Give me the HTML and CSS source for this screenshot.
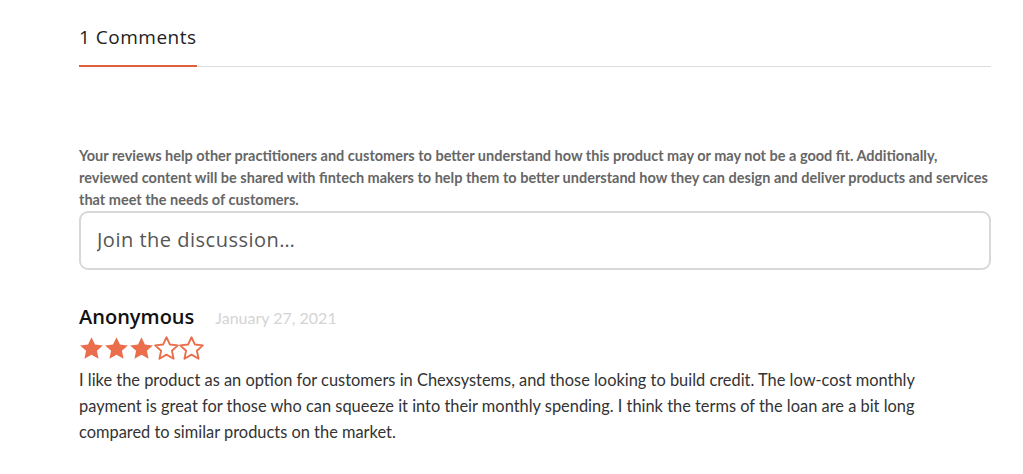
FILE: index.html
```html
<!DOCTYPE html>
<html lang="en">
<head>
  <meta charset="UTF-8" />
  <title>Comments</title>
  <link rel="stylesheet" href="styles.css">
</head>
<body>
  <div class="comments">
    <div class="tabs">
      <div class="tab active">1 Comments</div>
    </div>

    <p class="note">Your reviews help other practitioners and customers to better understand how this product may or may not be a good fit. Additionally, reviewed content will be shared with fintech makers to help them to better understand how they can design and deliver products and services that meet the needs of customers.</p>

    <input class="discuss" type="text" placeholder="Join the discussion…">

    <div class="comment">
      <div class="comment-head">
        <span class="author">Anonymous</span>
        <span class="date">January 27, 2021</span>
      </div>
      <div class="stars">
        <svg viewBox="0 0 24 24" class="star full"><path d="M12 1.2l3.3 7 7.6.8-5.7 5.2 1.6 7.6L12 17.9l-6.8 3.9 1.6-7.6L1.1 9l7.6-.8z"/></svg>
        <svg viewBox="0 0 24 24" class="star full"><path d="M12 1.2l3.3 7 7.6.8-5.7 5.2 1.6 7.6L12 17.9l-6.8 3.9 1.6-7.6L1.1 9l7.6-.8z"/></svg>
        <svg viewBox="0 0 24 24" class="star full"><path d="M12 1.2l3.3 7 7.6.8-5.7 5.2 1.6 7.6L12 17.9l-6.8 3.9 1.6-7.6L1.1 9l7.6-.8z"/></svg>
        <svg viewBox="0 0 24 24" class="star empty"><path d="M12 1.2l3.3 7 7.6.8-5.7 5.2 1.6 7.6L12 17.9l-6.8 3.9 1.6-7.6L1.1 9l7.6-.8z"/></svg>
        <svg viewBox="0 0 24 24" class="star empty"><path d="M12 1.2l3.3 7 7.6.8-5.7 5.2 1.6 7.6L12 17.9l-6.8 3.9 1.6-7.6L1.1 9l7.6-.8z"/></svg>
      </div>
      <p class="text">I like the product as an option for customers in Chexsystems, and those looking to build credit. The low-cost monthly payment is great for those who can squeeze it into their monthly spending. I think the terms of the loan are a bit long compared to similar products on the market.</p>
    </div>
  </div>
</body>
</html>
```

FILE: styles.css
```css
* {
  margin: 0;
  padding: 0;
  box-sizing: border-box;
}

body {
  background: #fff;
  font-family: Lato, "Open Sans", sans-serif;
  color: #333;
}

.comments {
  width: 912px;
  margin-left: 79px;
  padding-top: 24px;
}

.tabs {
  display: flex;
  border-bottom: 1px solid #ddd;
}

.tab {
  font-family: "Open Sans", sans-serif;
  font-size: 19px;
  letter-spacing: 0.5px;
  color: #222;
  padding-bottom: 15px;
  margin-bottom: -1px;
}

.tab.active {
  border-bottom: 2px solid #e0603c;
}

.note {
  margin-top: 78px;
  font-size: 14.5px;
  font-weight: 700;
  line-height: 22px;
  color: #666;
}

.discuss {
  display: block;
  width: 100%;
  height: 59px;
  border: 2px solid #d8d8d8;
  border-radius: 9px;
  padding: 0 16px 3px;
  font-family: "Open Sans", sans-serif;
  font-size: 20px;
  letter-spacing: 0.5px;
  color: #555;
  outline: none;
}

.discuss::placeholder {
  color: #555;
}

.comment {
  margin-top: 33px;
}

.comment-head {
  display: flex;
  align-items: baseline;
  gap: 21px;
}

.author {
  font-family: "Open Sans", sans-serif;
  font-size: 20px;
  font-weight: 600;
  color: #111;
}

.date {
  font-size: 16px;
  color: #d4d4d4;
}

.stars {
  display: flex;
  margin-top: 6px;
}

.star {
  width: 25px;
  height: 25px;
}

.star.full path {
  fill: #ea6e4c;
}

.star.empty path {
  fill: none;
  stroke: #ea6e4c;
  stroke-width: 1.8;
  stroke-linejoin: round;
}

.text {
  max-width: 900px;
  margin-top: 6px;
  font-size: 16.4px;
  line-height: 26px;
  color: #333;
}
```
